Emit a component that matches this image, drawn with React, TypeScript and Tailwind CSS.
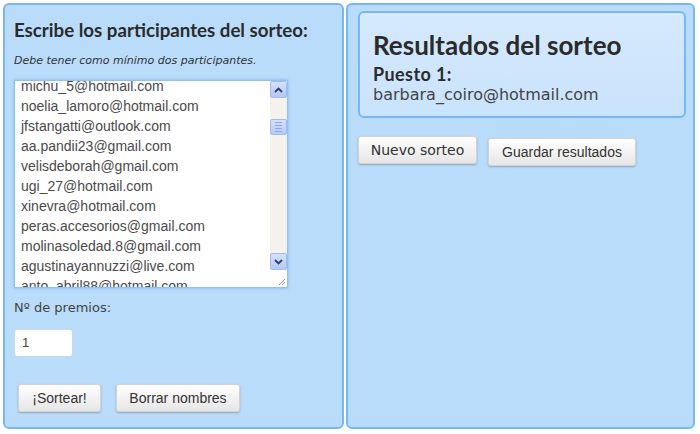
import React from "react";

const NAMES = [
  "michu_5@hotmail.com",
  "noelia_lamoro@hotmail.com",
  "jfstangatti@outlook.com",
  "aa.pandii23@gmail.com",
  "velisdeborah@gmail.com",
  "ugi_27@hotmail.com",
  "xinevra@hotmail.com",
  "peras.accesorios@gmail.com",
  "molinasoledad.8@gmail.com",
  "agustinayannuzzi@live.com",
  "anto_abril88@hotmail.com",
];

const btn =
  "h-[28px] shrink-0 rounded-[3px] border border-[#d2d2d2] bg-gradient-to-b from-white to-[#e6e6e6] px-2 text-[14px] text-[#333] shadow-[0_1px_2px_rgba(0,0,0,0.25)]";

function Chevron({ up }: { up?: boolean }) {
  return (
    <svg width="9" height="6" viewBox="0 0 9 6">
      <path
        d={up ? "M1 5 L4.5 1.5 L8 5" : "M1 1 L4.5 4.5 L8 1"}
        fill="none"
        stroke="#2c3e73"
        strokeWidth="1.8"
      />
    </svg>
  );
}

function Scrollbar() {
  return (
    <div className="flex w-[17px] shrink-0 flex-col bg-[#f4f2ec]">
      <div className="flex h-[17px] items-center justify-center rounded-[2px] border border-[#a7baea] bg-gradient-to-b from-[#d5e0fb] to-[#b5c9f5]">
        <Chevron up />
      </div>
      <div className="relative flex-1">
        <div className="absolute left-0 right-0 top-[21px] flex h-[16px] flex-col items-center justify-center gap-[2px] rounded-[2px] border border-[#a7baea] bg-gradient-to-b from-[#d5e0fb] to-[#b5c9f5]">
          <div className="h-px w-[7px] bg-[#8fa6e0]" />
          <div className="h-px w-[7px] bg-[#8fa6e0]" />
          <div className="h-px w-[7px] bg-[#8fa6e0]" />
          <div className="h-px w-[7px] bg-[#8fa6e0]" />
        </div>
      </div>
      <div className="flex h-[17px] items-center justify-center rounded-[2px] border border-[#a7baea] bg-gradient-to-b from-[#d5e0fb] to-[#b5c9f5]">
        <Chevron />
      </div>
      <div className="flex h-[17px] items-end justify-end bg-white pb-[1px] pr-[1px]">
        <svg width="8" height="8" viewBox="0 0 8 8">
          <path d="M1 7 L7 1 M4 7 L7 4" stroke="#999" strokeWidth="1" />
        </svg>
      </div>
    </div>
  );
}

export default function App() {
  return (
    <div className="flex h-[434px] w-[700px] gap-[2px] bg-white p-[3px] pr-[5px] pb-[5px] text-[#333]">
      <div
        className="flex w-[341px] shrink-0 flex-col rounded-[6px] border-2 border-[#78b7f2] bg-[#badcfb] px-[9px] pt-[12px]"
        style={{ fontFamily: "'DejaVu Sans', Verdana, sans-serif" }}
      >
        <h2
          className="text-[18.7px] font-bold leading-[26px] text-[#2b2b2b]"
          style={{ fontFamily: "Lato, sans-serif" }}
        >
          Escribe los participantes del sorteo:
        </h2>
        <p className="mt-[11px] text-[11px] italic leading-[14px] text-[#333]">
          Debe tener como mínimo dos participantes.
        </p>
        <div className="mt-[12px] flex h-[208px] w-[274px] overflow-hidden border border-[#8ec2f0] bg-white shadow-[0_0_3px_rgba(80,150,230,0.6)]">
          <div
            className="flex-1 overflow-hidden pl-[6px] text-[14px] leading-[20px] text-[#4a4a4a]"
            style={{ fontFamily: "'Liberation Sans', Arial, sans-serif" }}
          >
            <div className="-mt-[5px]">
              {NAMES.map((n) => (
                <div key={n} className="whitespace-nowrap">
                  {n}
                </div>
              ))}
            </div>
          </div>
          <Scrollbar />
        </div>
        <div className="mt-[11px] text-[13px] leading-[18px] text-[#444]">Nº de premios:</div>
        <div
          className="mt-[12px] flex h-[28px] w-[59px] items-center rounded-[3px] border border-[#c9d9ea] bg-white pl-[7px] text-[13px] text-[#444]"
          style={{ fontFamily: "'Liberation Sans', Arial, sans-serif" }}
        >
          1
        </div>
        <div
          className="mt-[27px] flex gap-[15px] pl-[4px]"
          style={{ fontFamily: "'Liberation Sans', Arial, sans-serif" }}
        >
          <button className={btn + " w-[83px]"}>¡Sortear!</button>
          <button className={btn + " w-[124px]"}>Borrar nombres</button>
        </div>
      </div>

      <div
        className="flex min-w-0 flex-1 flex-col rounded-[6px] border-2 border-[#78b7f2] bg-[#badcfb] px-[10px] pt-[6px]"
        style={{ fontFamily: "'DejaVu Sans', Verdana, sans-serif" }}
      >
        <div className="h-[107px] w-[328px] rounded-[6px] border-2 border-[#7ab6f2] bg-gradient-to-b from-[#d6e9fd] to-[#c9e3fc] px-[13px] pt-[18px]">
          <h1
            className="text-[26px] font-bold leading-[28px] text-[#2b2b2b]"
            style={{ fontFamily: "Lato, sans-serif" }}
          >
            Resultados del sorteo
          </h1>
          <div
            className="mt-[6px] text-[18px] font-bold leading-[18px] tracking-[0.4px] text-[#2b2b2b]"
            style={{ fontFamily: "Lato, sans-serif" }}
          >
            Puesto 1:
          </div>
          <div className="mt-[2px] text-[16px] leading-[20px] text-[#444]">
            barbara_coiro@hotmail.com
          </div>
        </div>
        <div className="mt-[18px] flex items-start gap-[11px]">
          <button className={btn + " w-[119px] font-normal"}>Nuevo sorteo</button>
          <button
            className={btn + " mt-[2px] w-[148px]"}
            style={{ fontFamily: "'Liberation Sans', Arial, sans-serif" }}
          >
            Guardar resultados
          </button>
        </div>
      </div>
    </div>
  );
}
